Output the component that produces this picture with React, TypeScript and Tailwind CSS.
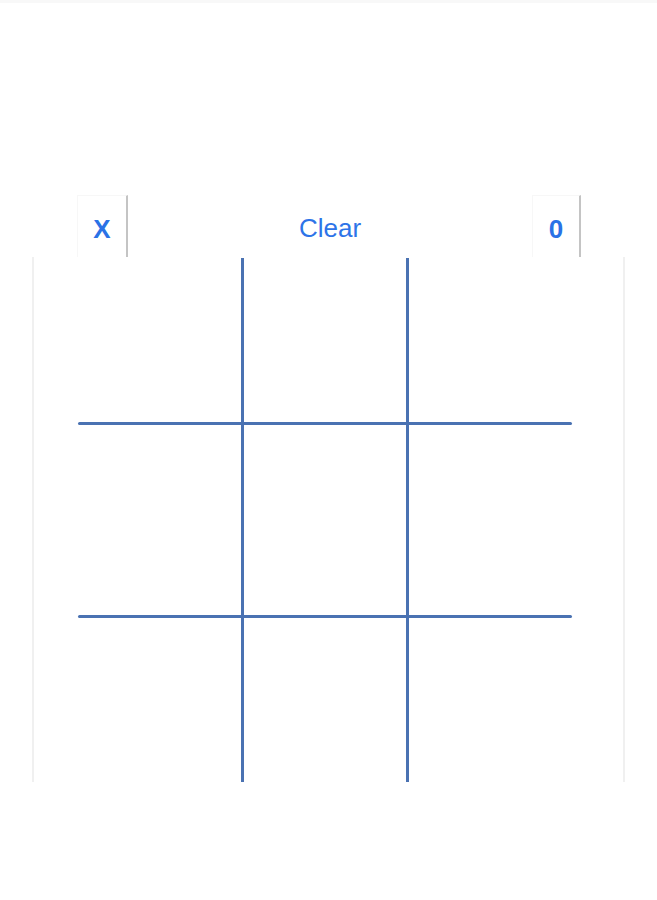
import React from "react";

const LINE = "bg-[#4a72b2]";

function CellRow({ h }: { h: string }) {
  return (
    <div className={`flex ml-[44px] w-[494px] ${h}`}>
      <div className="w-[163px]" />
      <div className={`w-[3px] ${LINE}`} />
      <div className="w-[162px]" />
      <div className={`w-[3px] ${LINE}`} />
      <div className="w-[163px]" />
    </div>
  );
}

function HLine() {
  return <div className={`ml-[44px] w-[494px] h-[3px] rounded-full ${LINE}`} />;
}

export default function App() {
  return (
    <div
      className="w-[657px] h-[900px] bg-white"
      style={{ fontFamily: '"Liberation Sans", Arial, sans-serif' }}
    >
      <div className="h-[3px] bg-[#f8f8f8]" />
      <div className="pt-[192px]">
        <div className="ml-[77px] mr-[76px] h-[62px] flex items-center justify-between">
          <button className="w-[51px] h-[62px] pt-[4px] flex items-center justify-center border-t border-l border-[#f7f7f7] border-r-2 border-r-[#c4c4c4] text-[26px] font-bold text-[#2a72e6] leading-none">
            X
          </button>
          <button className="pt-[4px] text-[26px] text-[#2d74e8] leading-none">Clear</button>
          <button className="w-[49px] h-[62px] pt-[4px] flex items-center justify-center border-t border-l border-[#f7f7f7] border-r-2 border-r-[#c4c4c4] text-[26px] font-bold text-[#2a72e6] leading-none">
            0
          </button>
        </div>
        <div className="ml-[32px] w-[593px] h-[525px] border-l-2 border-r-2 border-[#f0f0f0] flex flex-col pt-px">
          <CellRow h="h-[164px]" />
          <HLine />
          <CellRow h="h-[190px]" />
          <HLine />
          <CellRow h="h-[164px]" />
        </div>
      </div>
    </div>
  );
}
